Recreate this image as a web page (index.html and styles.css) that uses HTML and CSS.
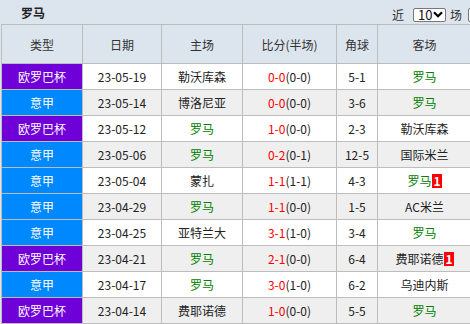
FILE: index.html
```html
<!DOCTYPE html>
<html lang="zh">
<head>
<meta charset="utf-8">
<link rel="stylesheet" href="styles.css">
</head>
<body>
<div class="page">
  <div class="topbar">
    <span class="title">罗马</span>
    <div class="tools">
      <span>近</span>
      <span class="select">10<svg class="chev" width="10" height="7" viewBox="0 0 10 7"><path d="M1 1.2 L5 5.2 L9 1.2" fill="none" stroke="#000" stroke-width="2.2"/></svg></span>
      <span>场</span>
      <span class="check"></span>
    </div>
  </div>
  <div class="grid" role="table">
    <div class="row head" role="row">
      <div>类型</div><div>日期</div><div>主场</div><div>比分(半场)</div><div>角球</div><div>客场</div>
    </div>
    <div class="row" role="row">
      <div class="type uel">欧罗巴杯</div><div>23-05-19</div><div>勒沃库森</div><div><span class="red">0-0</span>(0-0)</div><div>5-1</div><div class="g">罗马</div>
    </div>
    <div class="row alt" role="row">
      <div class="type sa">意甲</div><div>23-05-14</div><div>博洛尼亚</div><div><span class="red">0-0</span>(0-0)</div><div>3-6</div><div class="g">罗马</div>
    </div>
    <div class="row" role="row">
      <div class="type uel">欧罗巴杯</div><div>23-05-12</div><div class="g">罗马</div><div><span class="red">1-0</span>(0-0)</div><div>2-3</div><div>勒沃库森</div>
    </div>
    <div class="row alt" role="row">
      <div class="type sa">意甲</div><div>23-05-06</div><div class="g">罗马</div><div><span class="red">0-2</span>(0-1)</div><div>12-5</div><div>国际米兰</div>
    </div>
    <div class="row" role="row">
      <div class="type sa">意甲</div><div>23-05-04</div><div>蒙扎</div><div><span class="red">1-1</span>(1-1)</div><div>4-3</div><div class="g">罗马<span class="card">1</span></div>
    </div>
    <div class="row alt" role="row">
      <div class="type sa">意甲</div><div>23-04-29</div><div class="g">罗马</div><div><span class="red">1-1</span>(0-0)</div><div>1-5</div><div>AC米兰</div>
    </div>
    <div class="row" role="row">
      <div class="type sa">意甲</div><div>23-04-25</div><div>亚特兰大</div><div><span class="red">3-1</span>(1-0)</div><div>3-4</div><div class="g">罗马</div>
    </div>
    <div class="row alt" role="row">
      <div class="type uel">欧罗巴杯</div><div>23-04-21</div><div class="g">罗马</div><div><span class="red">2-1</span>(0-0)</div><div>6-4</div><div>费耶诺德<span class="card">1</span></div>
    </div>
    <div class="row" role="row">
      <div class="type sa">意甲</div><div>23-04-17</div><div class="g">罗马</div><div><span class="red">3-0</span>(1-0)</div><div>6-2</div><div>乌迪内斯</div>
    </div>
    <div class="row alt" role="row">
      <div class="type uel">欧罗巴杯</div><div>23-04-14</div><div>费耶诺德</div><div><span class="red">1-0</span>(0-0)</div><div>5-5</div><div class="g">罗马</div>
    </div>
  </div>
</div>
</body>
</html>
```

FILE: styles.css
```css
html, body {
  margin: 0;
  padding: 0;
  overflow: hidden;
  background: #dce4ee;
}
.page {
  width: 470px;
  height: 324px;
  overflow: hidden;
  font-family: "Noto Sans CJK SC", "Noto Sans", sans-serif;
  font-size: 12px;
  color: #222;
  background: #dce4ee;
}
.topbar {
  width: 482px;
  height: 24px;
  display: flex;
  align-items: center;
  padding-left: 21px;
  box-sizing: border-box;
}
.title {
  font-weight: bold;
  color: #222;
  font-size: 12px;
}
.tools {
  margin-left: auto;
  display: flex;
  align-items: center;
  gap: 3px;
  font-size: 12px;
  color: #333;
  padding-top: 5px;
}
.select {
  display: inline-flex;
  align-items: center;
  justify-content: space-between;
  width: 33px;
  height: 14px;
  box-sizing: border-box;
  border: 1px solid #777;
  border-radius: 2px;
  background: #fff;
  padding: 0 2px 0 4px;
  margin: 0 1px 0 6px;
  font-size: 13px;
  color: #111;
  line-height: 12px;
}
.chev { display: block; }
.check {
  display: inline-block;
  width: 12px;
  height: 12px;
  border: 1px solid #777;
  border-radius: 2px;
  background: #fff;
  margin-left: 3px;
}
.grid {
  display: grid;
  grid-template-columns: 80px 78px 80px 93px 40px 93px;
  grid-template-rows: 38px;
  grid-auto-rows: 25px;
  gap: 1px;
  padding: 1px;
  margin-left: 1px;
  width: max-content;
  background: #bdbdbd;
}
.row { display: contents; }
.row > div {
  display: flex;
  align-items: center;
  justify-content: center;
  background: #fff;
  white-space: nowrap;
  color: #222;
}
.row.alt > div { background: #efefef; }
.row.head > div {
  background: #dce4ee;
  color: #333;
}
.row > div.type { color: #fff; }
.row > div.uel { background: #6f00d8; }
.row > div.sa { background: #0088ff; }
.row > div.g { color: #008000; }
.red { color: #ff0000; }
.card {
  display: inline-block;
  background: #f00;
  color: #fff;
  font-weight: bold;
  font-size: 12px;
  line-height: 14px;
  height: 14px;
  padding: 0 1px;
  margin-left: 1px;
}
```
